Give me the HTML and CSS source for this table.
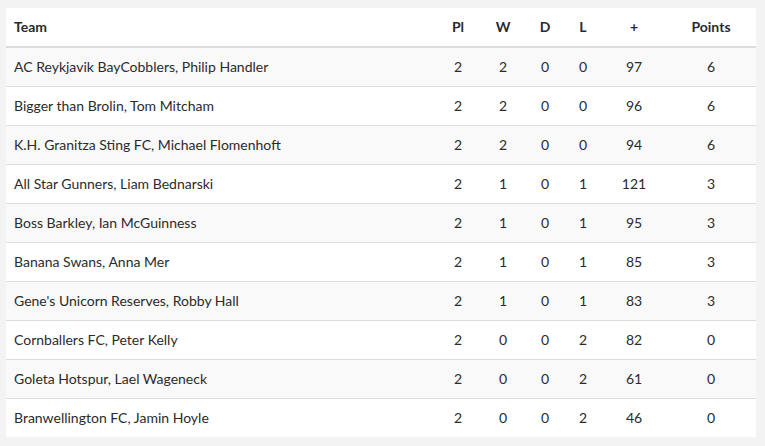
FILE: index.html
```html
<!DOCTYPE html>
<html>
<head>
<meta charset="utf-8">
<link rel="stylesheet" href="styles.css">
</head>
<body>
<table class="standings">
  <colgroup>
    <col class="c-team"><col class="c-pl"><col class="c-w"><col class="c-d"><col class="c-l"><col class="c-plus"><col class="c-pts">
  </colgroup>
  <thead>
    <tr><th class="team">Team</th><th>Pl</th><th>W</th><th>D</th><th>L</th><th>+</th><th>Points</th></tr>
  </thead>
  <tbody>
    <tr><td class="team">AC Reykjavik BayCobblers, Philip Handler</td><td>2</td><td>2</td><td>0</td><td>0</td><td>97</td><td>6</td></tr>
    <tr><td class="team">Bigger than Brolin, Tom Mitcham</td><td>2</td><td>2</td><td>0</td><td>0</td><td>96</td><td>6</td></tr>
    <tr><td class="team">K.H. Granitza Sting FC, Michael Flomenhoft</td><td>2</td><td>2</td><td>0</td><td>0</td><td>94</td><td>6</td></tr>
    <tr><td class="team">All Star Gunners, Liam Bednarski</td><td>2</td><td>1</td><td>0</td><td>1</td><td>121</td><td>3</td></tr>
    <tr><td class="team">Boss Barkley, Ian McGuinness</td><td>2</td><td>1</td><td>0</td><td>1</td><td>95</td><td>3</td></tr>
    <tr><td class="team">Banana Swans, Anna Mer</td><td>2</td><td>1</td><td>0</td><td>1</td><td>85</td><td>3</td></tr>
    <tr><td class="team">Gene's Unicorn Reserves, Robby Hall</td><td>2</td><td>1</td><td>0</td><td>1</td><td>83</td><td>3</td></tr>
    <tr><td class="team">Cornballers FC, Peter Kelly</td><td>2</td><td>0</td><td>0</td><td>2</td><td>82</td><td>0</td></tr>
    <tr><td class="team">Goleta Hotspur, Lael Wageneck</td><td>2</td><td>0</td><td>0</td><td>2</td><td>61</td><td>0</td></tr>
    <tr><td class="team">Branwellington FC, Jamin Hoyle</td><td>2</td><td>0</td><td>0</td><td>2</td><td>46</td><td>0</td></tr>
  </tbody>
</table>
</body>
</html>
```
FILE: styles.css
```css
html, body {
  background: #f3f3f3;
}
body {
  margin: 8px 9px 0 6px;
  font-family: Lato, "Open Sans", sans-serif;
  font-size: 14px;
  color: #2b2b2b;
}
.standings {
  width: 750px;
  table-layout: fixed;
  border-collapse: collapse;
  background: #fff;
}
.c-team { width: 430px; }
.c-pl { width: 44px; }
.c-w { width: 46px; }
.c-d { width: 38px; }
.c-l { width: 38px; }
.c-plus { width: 64px; }
.c-pts { width: 90px; }
th, td {
  height: 36px;
  padding: 0 8px 2px;
  text-align: center;
  vertical-align: middle;
  white-space: nowrap;
}
th {
  font-weight: bold;
  border-bottom: 2px solid #ddd;
}
td {
  border-top: 1px solid #ddd;
}
tbody tr:first-child td {
  border-top: none;
}
.team {
  text-align: left;
}
tbody tr:nth-child(odd) {
  background: #f9f9f9;
}
```
